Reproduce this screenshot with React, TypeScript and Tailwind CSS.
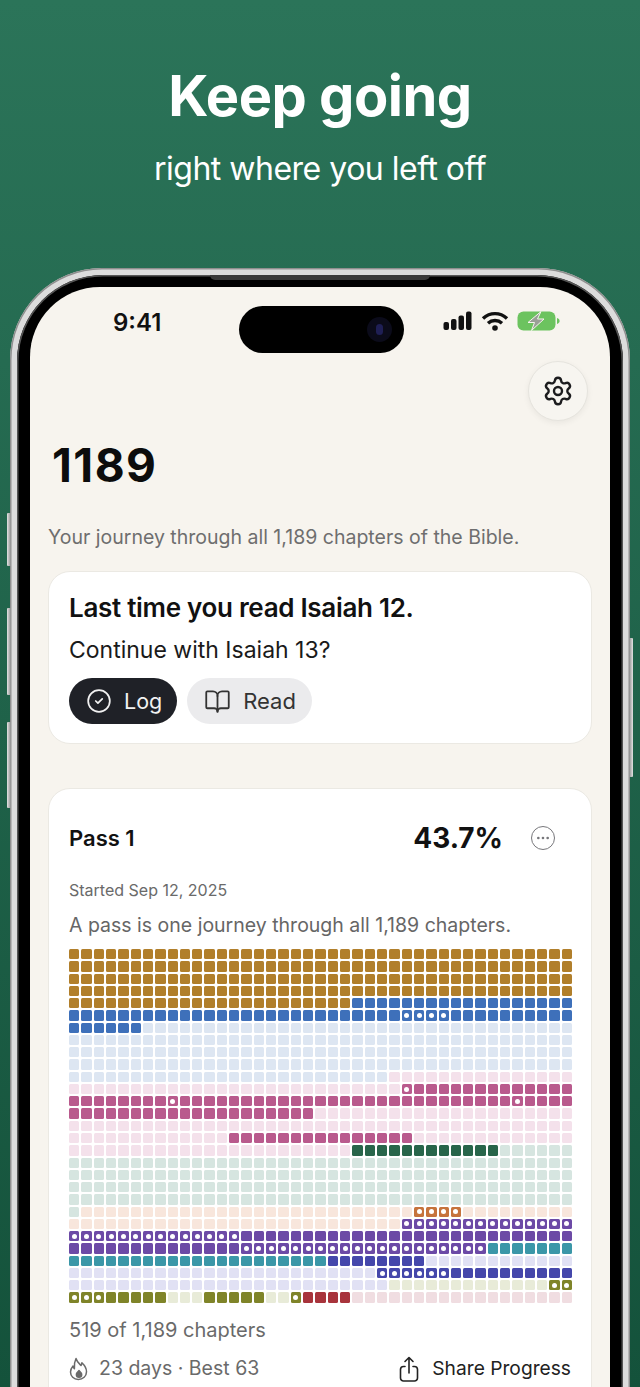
import { BookOpen, CircleCheck, Ellipsis, Settings } from 'lucide-react';

const COLS = 41;
const TOTAL = 1189;
const at = (row: number, col: number) => row * COLS + col;

// where each section of the Bible starts, in chapters
const sections = [
  { start: 0, full: 'bg-[#b17f2b]', light: 'bg-[#f5e7cd]' },
  { start: 187, full: 'bg-[#3e70ba]', light: 'bg-[#dde6f2]' },
  { start: 436, full: 'bg-[#b95a8d]', light: 'bg-[#f4e1eb]' },
  { start: 679, full: 'bg-[#28654a]', light: 'bg-[#d6e5e0]' },
  { start: 862, full: 'bg-[#c6733c]', light: 'bg-[#f8e6dc]' },
  { start: 929, full: 'bg-[#6c4aa6]', light: 'bg-[#e5dff2]' },
  { start: 1018, full: 'bg-[#3b97a8]', light: 'bg-[#d9edf1]' },
  { start: 1046, full: 'bg-[#4547ab]', light: 'bg-[#e1e1f4]' },
  { start: 1133, full: 'bg-[#7f8429]', light: 'bg-[#e8ebd8]' },
  { start: 1167, full: 'bg-[#a8343c]', light: 'bg-[#f0dde1]' },
];

// [from, to, dotted]
const spans: [number, number, boolean][] = [
  [0, at(6, 5), false],
  [at(5, 27), at(5, 30), true],
  [at(11, 27), at(11, 27), true],
  [at(11, 28), at(13, 19), false],
  [at(12, 8), at(12, 8), true],
  [at(12, 36), at(12, 36), true],
  [at(15, 13), at(15, 27), false],
  [at(16, 23), at(16, 34), false],
  [at(21, 28), at(21, 31), true],
  [at(22, 27), at(23, 13), true],
  [at(23, 14), at(24, 13), false],
  [at(24, 14), at(24, 33), true],
  [at(24, 34), at(25, 28), false],
  [at(26, 25), at(26, 30), true],
  [at(26, 31), at(26, 40), false],
  [at(27, 39), at(28, 2), true],
  [at(28, 3), at(28, 7), false],
  [at(28, 11), at(28, 15), false],
  [at(28, 18), at(28, 18), true],
  [at(28, 19), at(28, 22), false],
];

const cells = Array.from({ length: TOTAL }, (_, i) => {
  const section = [...sections].reverse().find((s) => i >= s.start)!;
  const hits = spans.filter(([a, b]) => i >= a && i <= b);
  return {
    color: hits.length ? section.full : section.light,
    dot: hits.some((h) => h[2]),
  };
});

function SideButton({ className }: { className: string }) {
  return (
    <div
      className={`absolute w-[4px] bg-gradient-to-r from-[#e4e4e4] to-[#8d8d8d] rounded-l-[1px] ${className}`}
    />
  );
}

function StatusIcons() {
  return (
    <div className="flex items-center ml-[39px] mt-[5px]">
      <svg width="30" height="20" viewBox="0 0 30 20" fill="#111">
        <rect x="0.5" y="11" width="5.5" height="8" rx="2" />
        <rect x="8" y="8" width="5.5" height="11" rx="2" />
        <rect x="15.5" y="4.5" width="5.5" height="14.5" rx="2" />
        <rect x="23" y="0.5" width="5.5" height="18.5" rx="2" />
      </svg>
      <svg className="ml-[8px]" width="28" height="20" viewBox="0 0 28 20" fill="none" stroke="#111" strokeWidth="3.4">
        <path d="M2 7.5C9 1 19 1 26 7.5" />
        <path d="M7 12.2C11 8.6 17 8.6 21 12.2" />
        <circle cx="14" cy="17" r="2.8" fill="#111" stroke="none" />
      </svg>
      <svg className="ml-[8px]" width="43" height="20" viewBox="0 0 43 20">
        <rect x="0.5" y="0.5" width="38" height="19" rx="6" fill="#6cc35f" />
        <path d="M40 7v6c1.6-.4 2.6-1.6 2.6-3S41.600 7.400 40 7z" fill="#6cc35f" />
        <path d="M24 0.500 11 11.500h6.500l-3 8 12.500-11.500h-6.500z" fill="#9a9f97" stroke="#f7f4ee" strokeWidth="1" />
      </svg>
    </div>
  );
}

export default function App() {
  return (
    <div className="relative w-[640px] h-[1387px] overflow-hidden bg-gradient-to-b from-[#2b7459] to-[#14523b] font-['Inter','Liberation_Sans',sans-serif]">
      <div className="flex flex-col items-center pt-[62px] text-white">
        <h1 className="text-[56px] leading-[68px] font-bold tracking-[-0.5px]">Keep going</h1>
        <p className="mt-[19px] text-[32px] leading-[40px] tracking-[-0.5px]">right where you left off</p>
      </div>

      <div className="relative mt-[79px] mx-[10px] rounded-t-[92px] bg-[#dcdcdc] shadow-[inset_0_0_0_1.5px_#8f8f8f] pt-[7px] px-[7px]">
        <SideButton className="left-[-3px] top-[245px] h-[53px]" />
        <SideButton className="left-[-3px] top-[340px] h-[87px]" />
        <SideButton className="left-[-3px] top-[454px] h-[86px]" />
        <SideButton className="right-[-3px] top-[370px] h-[139px] rotate-180" />

        <div className="relative rounded-t-[86px] bg-black shadow-[inset_0_0_0_1.5px_#555555] pt-[12px] px-[13px]">
          <div className="absolute top-0 left-[193px] w-[220px] h-[5px] rounded-b-[8px] bg-[#3a3a3a]" />
          <div className="rounded-t-[70px] bg-[#f7f4ee] h-[1120px] px-[18px]">
            <div className="flex items-start pt-[19px] h-[74px]">
              <span className="ml-[65px] mt-[1px] text-[24px] leading-[32px] font-semibold text-[#111]">9:41</span>
              <div className="relative ml-[78px] w-[165px] h-[47px] rounded-full bg-black">
                <div className="absolute right-[12px] top-[11px] w-[25px] h-[25px] rounded-full bg-[#0b0b1a] flex items-center justify-center">
                  <div className="w-[7px] h-[11px] rounded-full bg-[#1f1f55]" />
                </div>
              </div>
              <StatusIcons />
            </div>

            <div className="flex justify-end mr-[4px]">
              <button className="flex items-center justify-center w-[60px] h-[60px] rounded-full bg-[#f7f5f0] border border-[#e6e4de] shadow-[0_2px_6px_rgba(0,0,0,0.06)]">
                <Settings size={32} strokeWidth={1.8} className="text-[#1c1c1e]" />
              </button>
            </div>

            <h2 className="mt-[16px] ml-[4px] text-[46px] leading-[56px] font-bold text-[#0c0c0c] tracking-[1.5px]">1189</h2>
            <p className="mt-[31px] text-[19.5px] leading-[26px] text-[#6e6e6e]">
              Your journey through all 1,189 chapters of the Bible.
            </p>

            <div className="mt-[21px] w-[544px] h-[173px] rounded-[22px] bg-white border border-[#ebe9e3] px-[20px] pt-[19px]">
              <p className="text-[26px] leading-[34px] font-semibold text-[#111] tracking-[-0.3px]">
                Last time you read Isaiah 12.
              </p>
              <p className="mt-[10px] text-[23px] leading-[30px] text-[#1a1a1a]">Continue with Isaiah 13?</p>
              <div className="flex gap-[10px] mt-[13px]">
                <button className="flex items-center gap-[12px] h-[46px] pl-[17px] pr-[15px] rounded-full bg-[#1f2127] text-[#f1f1f1] text-[21.5px]">
                  <CircleCheck size={26} strokeWidth={1.6} />
                  Log
                </button>
                <button className="flex items-center gap-[12px] h-[46px] pl-[17px] pr-[16px] rounded-full bg-[#ebebed] text-[#333] text-[22px]">
                  <BookOpen size={27} strokeWidth={1.6} />
                  Read
                </button>
              </div>
            </div>

            <div className="mt-[44px] w-[544px] rounded-[22px] bg-white border border-[#ebe9e3] px-[20px] pt-[31px] pb-[40px]">
              <div className="flex items-center h-[36px]">
                <span className="text-[22px] leading-[30px] font-semibold text-[#111]">Pass 1</span>
                <span className="ml-auto text-[28px] leading-[36px] font-bold text-[#111]">43.7%</span>
                <span className="ml-[28px] mr-[16px] flex items-center justify-center w-[24px] h-[24px] rounded-full border-[1.5px] border-[#77777b]">
                  <Ellipsis size={16} strokeWidth={2} className="text-[#77777b]" />
                </span>
              </div>
              <p className="mt-[24px] text-[16px] leading-[20px] text-[#6a6a6a]">Started Sep 12, 2025</p>
              <p className="mt-[12px] text-[19.5px] leading-[26px] text-[#666]">
                A pass is one journey through all 1,189 chapters.
              </p>

              <div className="mt-[11px] w-[503px] grid grid-cols-[repeat(41,minmax(0,1fr))] gap-[2px]">
                {cells.map((c, i) => (
                  <div key={i} className={`h-[10.27px] rounded-[1.5px] flex items-center justify-center ${c.color}`}>
                    {c.dot && <div className="w-[5px] h-[5px] rounded-full bg-white" />}
                  </div>
                ))}
              </div>

              <p className="mt-[13px] text-[20px] leading-[28px] text-[#6a6a6a]">519 of 1,189 chapters</p>

              <div className="flex items-center mt-[11px] h-[28px]">
                <svg width="20" height="24" viewBox="0 0 20 24" fill="none" stroke="#6a6a6a" strokeWidth="1.500" strokeLinejoin="round">
                  <path d="M7 1.500c1 3.500 3 5 5 7 .6-1 .8-1.800.9-2.800 2.700 2.500 4.600 5.500 4.600 9 0 4.500-3.600 7.800-8.200 7.800S1.500 19 1.500 15c0-2.300 1-4.200 2.500-6 .3 1.200.7 2 1.400 2.700C5.100 8 5.500 4.500 7 1.500z" />
                  <path d="M10 13.500c-1.500 1.400-2.600 2.700-2.600 4.200A2.700 2.700 0 0 0 10 20.300a2.700 2.700 0 0 0 2.700-2.600c0-1.500-1.200-2.800-2.700-4.200z" fill="#6a6a6a" />
                </svg>
                <span className="ml-[10px] text-[19.5px] text-[#6a6a6a]">23 days · Best 63</span>
                <svg className="ml-auto" width="20" height="26" viewBox="0 0 20 26" fill="none" stroke="#222" strokeWidth="1.600" strokeLinecap="round" strokeLinejoin="round">
                  <path d="M6 10.500H4.500a3 3 0 0 0-3 3v8.500a3 3 0 0 0 3 3h11a3 3 0 0 0 3-3v-8.500a3 3 0 0 0-3-3H14" />
                  <path d="M10 17V1.500M6 5.500l4-4 4 4" />
                </svg>
                <span className="ml-[13px] text-[19.2px] text-[#222]">Share Progress</span>
              </div>
            </div>
          </div>
        </div>
      </div>
    </div>
  );
}
